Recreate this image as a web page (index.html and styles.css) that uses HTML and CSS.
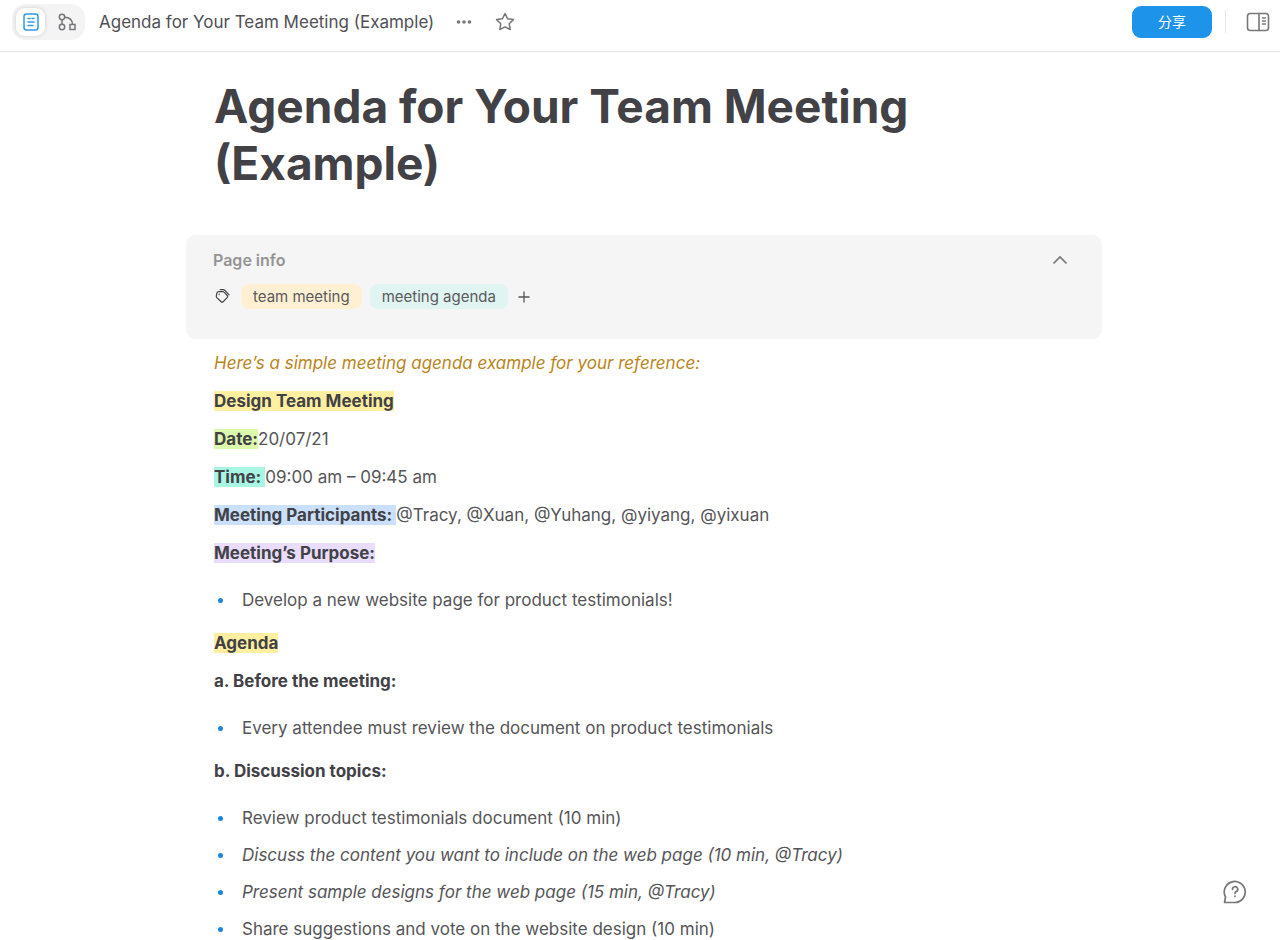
FILE: index.html
```
<!doctype html>
<html lang="en">
  <head>
    <meta charset="utf-8" />
    <meta name="viewport" content="width=device-width, initial-scale=1" />
    <title>Agenda for Your Team Meeting (Example)</title>
    <link rel="stylesheet" href="styles.css">
  </head>
  <body>
    <header class="topbar">
        <div class="view-switch">
            <button class="view-btn active" aria-label="Document view">
                <svg width="18" height="18" viewBox="0 0 18 18" fill="none" stroke="currentColor" stroke-width="1.5" stroke-linecap="round">
                    <rect x="2" y="1" width="14" height="16" rx="2.5" />
                    <path d="M6 5.5h2M6 9h6M6 12.5h5M10 5.5h2" />
                </svg>
            </button>
            <button class="view-btn" aria-label="Mind map view">
                <svg width="18" height="18" viewBox="0 0 18 18" fill="none" stroke="currentColor" stroke-width="1.5">
                    <circle cx="4" cy="4" r="2.7" />
                    <circle cx="4" cy="14" r="2.7" />
                    <rect x="12" y="11.5" width="5" height="5" />
                    <path d="M4 6.7v4.6M6.7 4.2c4.8 0 7.6 2.6 7.8 7.3" />
                </svg>
            </button>
        </div>
        <span class="doc-name">Agenda for Your Team Meeting (Example)</span>
        <button class="icon-btn" aria-label="More">
            <svg width="20" height="20" viewBox="0 0 20 20" fill="currentColor">
                <circle cx="4.5" cy="10" r="1.8" />
                <circle cx="10" cy="10" r="1.8" />
                <circle cx="15.5" cy="10" r="1.8" />
            </svg>
        </button>
        <button class="icon-btn star" aria-label="Favorite">
            <svg width="20" height="20" viewBox="0 0 20 20" fill="none" stroke="currentColor" stroke-width="1.5" stroke-linejoin="round">
                <path d="M10 1.5l2.6 5.3 5.8.8-4.2 4.1 1 5.8-5.2-2.7-5.2 2.7 1-5.8-4.2-4.1 5.8-.8z" />
            </svg>
        </button>
        <div class="topbar-right">
            <button class="share-btn" lang="zh">分享</button>
            <span class="divider"></span>
            <button class="icon-btn" aria-label="Toggle side panel">
                <svg width="24" height="20" viewBox="0 0 24 20" fill="none" stroke="currentColor" stroke-width="1.6" stroke-linecap="round">
                    <rect x="1.5" y="1.5" width="21" height="17" rx="2.8" />
                    <path d="M13 1.5v17M16.5 6h2.8M16.5 9h2.8M16.5 12h2.8" />
                </svg>
            </button>
        </div>
    </header>

    <main class="scroller">
        <article class="doc">
            <h1>Agenda for Your Team Meeting (Example)</h1>

            <section class="page-info">
                <div class="info-head">
                    <h2>Page info</h2>
                    <button class="icon-btn" aria-label="Collapse page info">
                        <svg width="16" height="16" viewBox="0 0 16 16" fill="none" stroke="currentColor" stroke-width="1.7">
                            <path d="M1.5 11.5L8 5l6.5 6.5" />
                        </svg>
                    </button>
                </div>
                <div class="tags">
                    <svg class="tag-icon" width="18" height="18" viewBox="0 0 18 18" fill="none" stroke="currentColor" stroke-width="1.2" stroke-linejoin="round" stroke-linecap="round">
                        <path d="M5.6 3.600h4q.9 0 1.500.6l3.200 3.300q.8.9 0 1.800l-4.300 4.500q-.9.900-1.800 0L3.800 9.600q-.6-.7-.5-1.500l.5-2.700q.3-1.700 1.800-1.800z" />
                        <path d="M7.200 1.600h3q.9 0 1.500.6l4.400 4.600" />
                        <circle cx="6.300" cy="6.400" r=".2" />
                    </svg>
                    <a class="tag orange" href="#">team meeting</a>
                    <a class="tag teal" href="#">meeting agenda</a>
                    <button class="icon-btn" aria-label="Add tag">
                        <svg width="12" height="12" viewBox="0 0 12 12" fill="none" stroke="currentColor" stroke-width="1.3">
                            <path d="M6 .5v11M.5 6h11" />
                        </svg>
                    </button>
                </div>
            </section>

            <div class="content">
                <p class="intro"><em>Here’s a simple meeting agenda example for your reference:</em></p>
                <p><strong class="hl yellow">Design Team Meeting</strong></p>
                <p><strong class="hl green">Date:</strong>20/07/21</p>
                <p><strong class="hl mint">Time: </strong>09:00 am – 09:45 am</p>
                <p><strong class="hl blue">Meeting Participants: </strong>@Tracy, @Xuan, @Yuhang, @yiyang, @yixuan</p>
                <p><strong class="hl purple">Meeting’s Purpose:</strong></p>
                <ul>
                    <li>Develop a new website page for product testimonials!</li>
                </ul>
                <p><strong class="hl yellow">Agenda</strong></p>
                <p><strong>a. Before the meeting:</strong></p>
                <ul>
                    <li>Every attendee must review the document on product testimonials</li>
                </ul>
                <p><strong>b. Discussion topics:</strong></p>
                <ul>
                    <li>Review product testimonials document (10 min)</li>
                    <li><em>Discuss the content you want to include on the web page (10 min, @Tracy)</em></li>
                    <li><em>Present sample designs for the web page (15 min, @Tracy)</em></li>
                    <li>Share suggestions and vote on the website design (10 min)</li>
                </ul>
            </div>
        </article>
    </main>

    <button class="help-btn" aria-label="Help">
        <svg width="24" height="24" viewBox="0 0 24 24" fill="none" stroke="currentColor" stroke-width="1.7" stroke-linecap="round" stroke-linejoin="round">
            <path d="M1.500 22.500l1-5.500A10.500 10.500 0 1 1 12 22.500z" />
            <path d="M9.500 9.300a2.600 2.600 0 1 1 3.800 2.300c-.9.500-1.300.9-1.300 1.800" />
            <path d="M12 16.200v.2" />
        </svg>
    </button>
  </body>
</html>
```
FILE: styles.css
```
* {
    box-sizing: border-box;
}
body {
    margin: 0;
    height: 100vh;
    display: flex;
    flex-direction: column;
    font-family: Inter, "Noto Sans CJK SC", sans-serif;
    color: #414146;
    background: #fff;
}
button {
    padding: 0;
    border: none;
    background: none;
    font: inherit;
    color: inherit;
    cursor: pointer;
}
svg {
    display: block;
}

/* top bar */
.topbar {
    flex: none;
    display: flex;
    align-items: center;
    height: 52px;
    padding: 0 10px 8px 12px;
    border-bottom: 1px solid #e6e6e6;
}
.view-switch {
    display: flex;
    gap: 7px;
    padding: 4px;
    margin-right: 14px;
    border-radius: 14px;
    background: #f4f4f4;
}
.view-btn {
    display: flex;
    align-items: center;
    justify-content: center;
    width: 29px;
    height: 28px;
    border-radius: 9px;
    color: #77777a;
}
.view-btn.active {
    background: #fff;
    color: #2f9aea;
    box-shadow: 0 0 4px rgba(0, 0, 0, 0.15);
}
.doc-name {
    font-size: 17px;
    color: #505055;
    white-space: nowrap;
    margin-right: 20px;
}
.icon-btn {
    color: #77777a;
}
.star {
    margin-left: 21px;
}
.topbar-right {
    display: flex;
    align-items: center;
    margin-left: auto;
}
.share-btn {
    width: 80px;
    height: 32px;
    border-radius: 9px;
    background: #1e93ea;
    color: #fff;
    font-size: 14px;
    line-height: 16px;
}
.divider {
    width: 1px;
    height: 23px;
    margin: 0 20px 0 13px;
    background: #e6e6e6;
}

/* document */
.scroller {
    flex: 1;
    min-height: 0;
    overflow-y: auto;
    scrollbar-width: none;
    padding-left: 8px;
}
.doc {
    max-width: 916px;
    margin: 0 auto;
}
h1 {
    margin: 26px 28px 43px;
    font-size: 46px;
    line-height: 57px;
    font-weight: 700;
}
.page-info {
    height: 104px;
    padding: 13px 34px 0 27px;
    border-radius: 9px;
    background: #f5f5f5;
}
.info-head {
    display: flex;
    align-items: center;
    justify-content: space-between;
    height: 24px;
    color: #949494;
}
.info-head h2 {
    margin: 0;
    font-size: 16px;
    font-weight: 600;
}
.tags {
    display: flex;
    align-items: center;
    margin-top: 12px;
}
.tag-icon {
    margin-right: 10px;
}
.tag {
    height: 25px;
    padding: 0 12px;
    margin-right: 8px;
    border-radius: 8px;
    font-size: 15px;
    line-height: 25px;
    color: #5a5a5c;
    text-decoration: none;
}
.tag.orange {
    background: #fff0d4;
}
.tag.teal {
    background: #e0f4f2;
}
.tags .icon-btn {
    margin-left: 2px;
    color: #55555a;
}
.content {
    padding: 5px 28px 40px;
    font-size: 17px;
    color: #555558;
}
p {
    margin: 0;
    line-height: 38px;
}
strong {
    font-weight: 700;
    color: #414146;
}
.intro {
    color: #b9851a;
}
.hl.yellow {
    background: #fef0a0;
}
.hl.green {
    background: #dcf8ac;
}
.hl.mint {
    background: #a8f5e4;
}
.hl.blue {
    background: #cae0fd;
}
.hl.purple {
    background: #e9dcfc;
}
ul {
    margin: 10px 0 5px;
    padding: 0 0 0 28px;
    list-style: none;
}
li {
    position: relative;
    line-height: 37px;
}
li::before {
    content: "";
    position: absolute;
    left: -24px;
    top: 16px;
    width: 5px;
    height: 5px;
    border-radius: 50%;
    background: #1c86dc;
}

.help-btn {
    position: fixed;
    right: 33px;
    bottom: 36px;
    color: #77777a;
}
```
